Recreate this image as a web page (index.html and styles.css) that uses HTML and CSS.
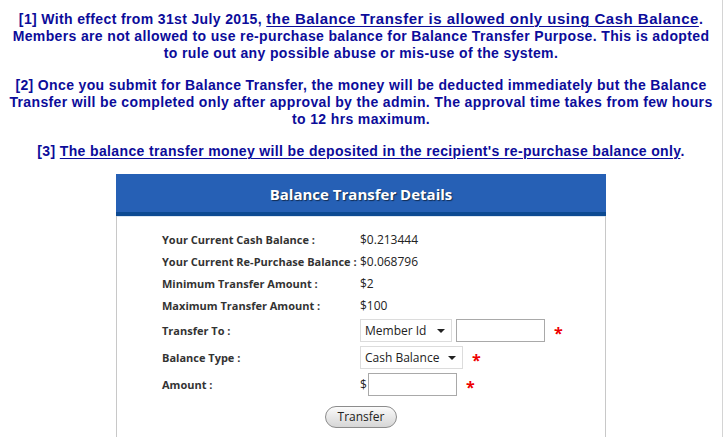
FILE: index.html
```html
<!DOCTYPE html>
<html>
<head>
<meta charset="utf-8">
<link rel="stylesheet" href="styles.css">
</head>
<body>
<div class="page">
  <div class="notes">
    <p>[1] With effect from 31st July 2015, <u class="big">the Balance Transfer is allowed only using Cash Balance</u>.<br>Members are not allowed to use re-purchase balance for Balance Transfer Purpose. This is adopted<br>to rule out any possible abuse or mis-use of the system.</p>
    <p>[2] Once you submit for Balance Transfer, the money will be deducted immediately but the Balance<br>Transfer will be completed only after approval by the admin. The approval time takes from few hours<br>to 12 hrs maximum.</p>
    <p>[3] <u>The balance transfer money will be deposited in the recipient's re-purchase balance only</u>.</p>
  </div>
  <div class="panel">
    <div class="panel-head">Balance Transfer Details</div>
    <div class="panel-body">
      <div class="form">
        <div class="lbl">Your Current Cash Balance :</div><div class="val">$0.213444</div>
        <div class="lbl">Your Current Re-Purchase Balance :</div><div class="val">$0.068796</div>
        <div class="lbl">Minimum Transfer Amount :</div><div class="val">$2</div>
        <div class="lbl">Maximum Transfer Amount :</div><div class="val">$100</div>
        <div class="lbl tall">Transfer To :</div>
        <div class="val tall">
          <span class="sel sel-member">Member Id<span class="caret"></span></span>
          <span class="inp inp-member"></span>
          <span class="star star-member">*</span>
        </div>
        <div class="lbl tall">Balance Type :</div>
        <div class="val tall">
          <span class="sel sel-cash">Cash Balance<span class="caret"></span></span>
          <span class="star star-cash">*</span>
        </div>
        <div class="lbl tall">Amount :</div>
        <div class="val tall">
          <span class="dollar">$</span><span class="inp inp-amount"></span>
          <span class="star star-amount">*</span>
        </div>
      </div>
      <div class="actions"><span class="btn">Transfer</span></div>
    </div>
  </div>
</div>
</body>
</html>
```
FILE: styles.css
```css
html, body { margin: 0; padding: 0; background: #fff; }
.page {
  width: 722px;
  height: 437px;
  border-right: 1px solid #d4d4d4;
  overflow: hidden;
}
.notes {
  padding-top: 10px;
  text-align: center;
  font-family: "Liberation Sans", Arial, sans-serif;
  font-weight: bold;
  font-size: 14px;
  letter-spacing: 0.36px;
  line-height: 17px;
  color: #0c0c9a;
}
.notes p { margin: 0 0 15px 0; }
.notes p:last-child { margin-bottom: 14px; }
.notes u { text-decoration-thickness: 1px; text-underline-offset: 2px; }
.notes u.big { font-size: 15px; letter-spacing: 0.5px; }

.panel {
  width: 488px;
  margin: 0 auto;
  border-left: 1px solid #c8c8c8;
  border-right: 1px solid #c8c8c8;
}
.panel-head {
  margin: 0 -1px;
  height: 38px;
  background: #2660b5;
  border-bottom: 4px solid #0d4a92;
  color: #fff;
  font-family: "Open Sans", sans-serif;
  font-weight: bold;
  font-size: 15px;
  line-height: 41px;
  text-align: center;
  text-shadow: 1px 1px 1px rgba(0,0,0,0.55);
}
.panel-body {
  border-top: 1px solid #dbe6f2;
  padding: 12px 0 20px;
  font-family: "Open Sans", sans-serif;
}
.form {
  display: grid;
  grid-template-columns: 198px auto;
  padding-left: 45px;
}
.lbl {
  font-size: 11px;
  font-weight: bold;
  color: #333;
  height: 22px;
  line-height: 22px;
}
.val {
  font-size: 12px;
  color: #222;
  height: 22px;
  line-height: 22px;
  display: flex;
  align-items: center;
}
.lbl.tall, .val.tall { height: 27px; line-height: 27px; }
.sel {
  box-sizing: border-box;
  height: 23px;
  border: 1px solid #dcdcdc;
  background: #fff;
  font-size: 12px;
  line-height: 21px;
  padding-left: 4px;
  display: inline-flex;
  align-items: center;
  color: #222;
}
.sel-member { width: 92px; }
.sel-cash { width: 103px; }
.caret {
  width: 0; height: 0;
  border-left: 4px solid transparent;
  border-right: 4px solid transparent;
  border-top: 4px solid #222;
  margin-left: auto;
  margin-right: 6px;
}
.inp {
  box-sizing: border-box;
  height: 23px;
  border: 1px solid #a9a9a9;
  background: #fff;
  display: inline-block;
}
.inp-member { width: 89px; margin-left: 4px; }
.inp-amount { width: 89px; }
.dollar { width: 8px; font-size: 12px; }
.star {
  color: #e00;
  font-weight: bold;
  font-size: 16px;
  line-height: 16px;
  padding-top: 4px;
}
.star-member { margin-left: 9px; }
.star-cash { margin-left: 9px; }
.star-amount { margin-left: 9px; }
.actions {
  display: flex;
  justify-content: center;
  padding-top: 8px;
}
.btn {
  box-sizing: border-box;
  width: 72px;
  height: 22px;
  border: 1px solid #8c8c8c;
  border-radius: 11px;
  background: linear-gradient(#fbfbfb, #e8e8e8 50%, #d6d6d6);
  font-family: "Open Sans", sans-serif;
  font-size: 12px;
  color: #222;
  text-align: center;
  line-height: 20px;
}
```
